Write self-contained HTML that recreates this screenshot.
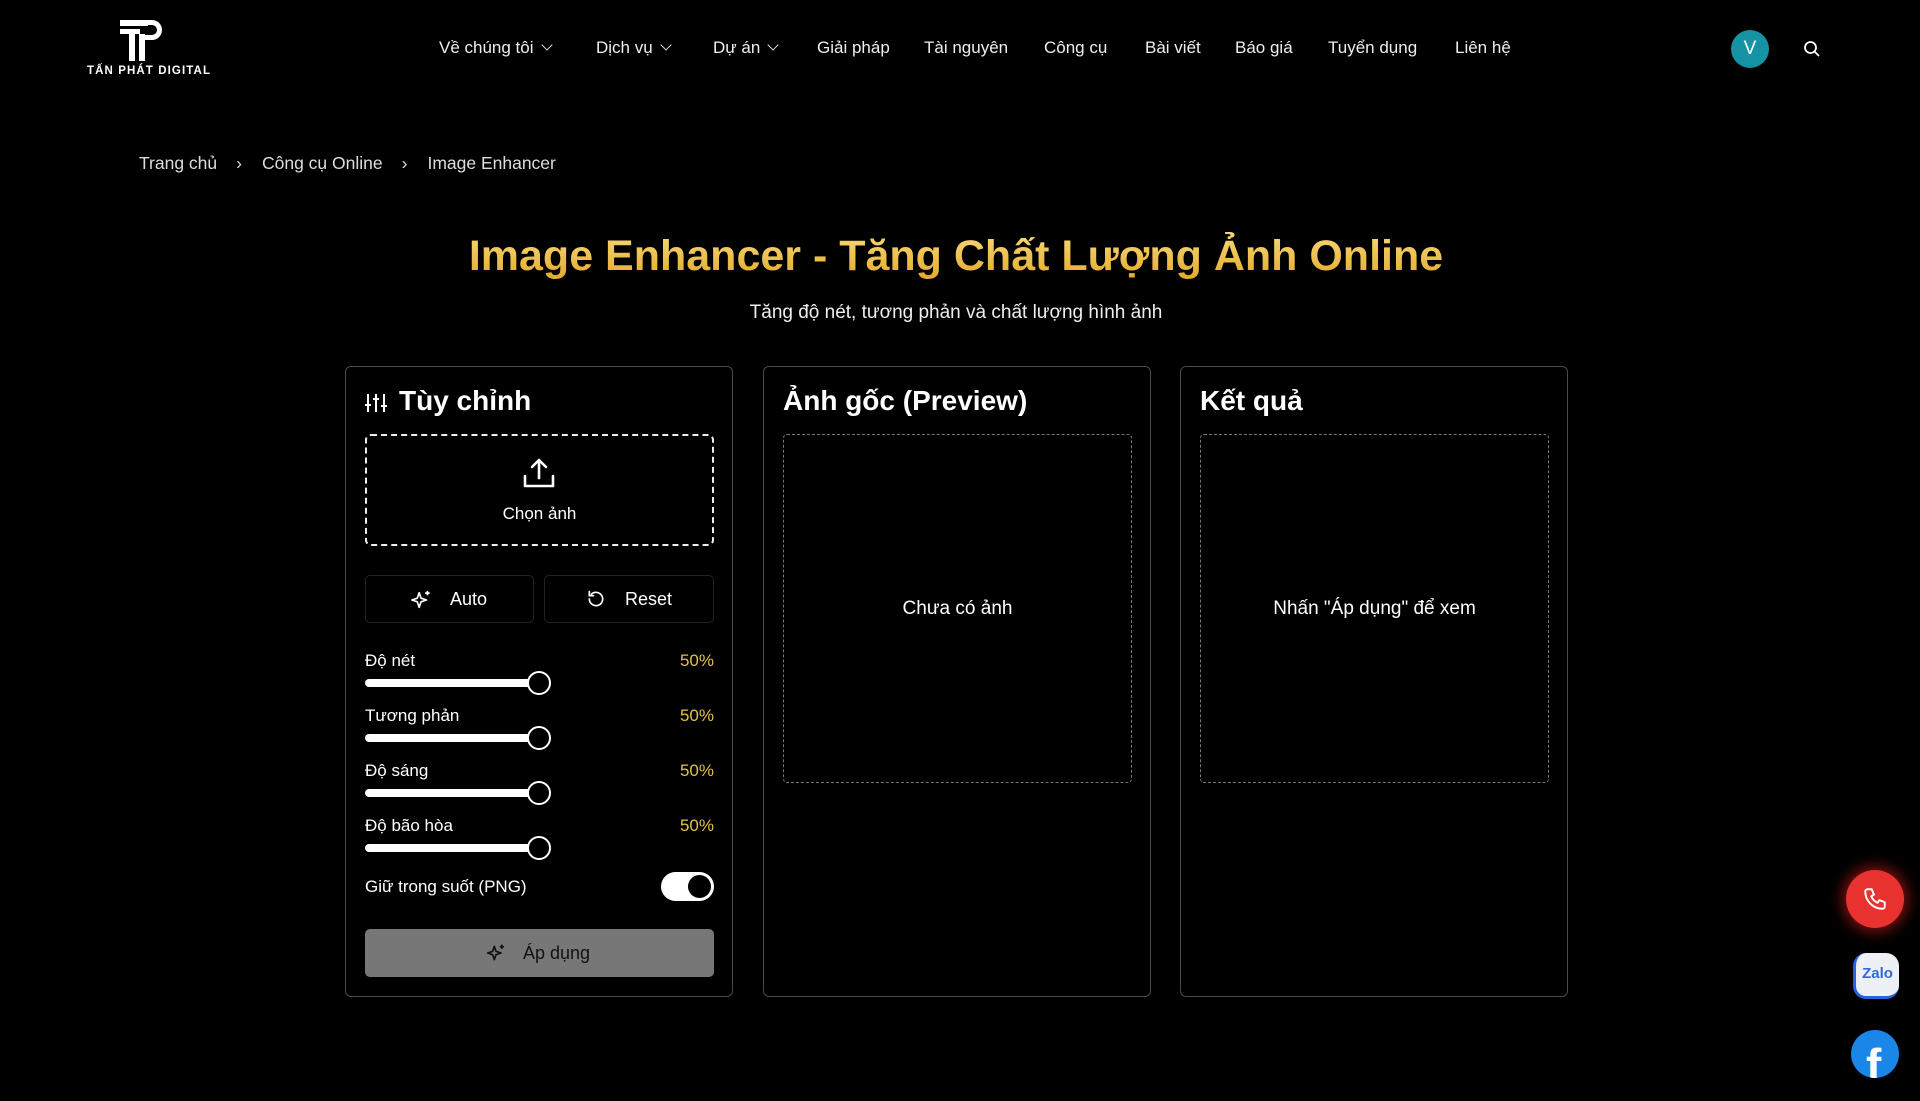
<!DOCTYPE html>
<html><head><meta charset="utf-8">
<style>
*{box-sizing:border-box;margin:0;padding:0}
body{width:1920px;height:1101px;background:#000;color:#fff;font-family:"Liberation Sans",sans-serif;position:relative;overflow:hidden}
.abs{position:absolute}
.nav{top:38px;font-size:17px;color:#eee;white-space:nowrap}
.chev{display:inline-block;width:8px;height:8px;border-right:1.6px solid #ddd;border-bottom:1.6px solid #ddd;transform:rotate(45deg);margin-left:9px;position:relative;top:-4px}
.panel{position:absolute;top:366px;width:388px;height:631px;border:1.5px solid #4a4a4a;border-radius:6px}
.ph{position:absolute;left:19px;top:18px;font-size:28px;font-weight:bold}
.pbox{position:absolute;left:19px;top:67px;width:349px;height:349px;border:1px dashed #777;border-radius:4px;display:flex;align-items:center;justify-content:center;font-size:19px}
.lbl{position:absolute;left:365px;font-size:17px}
.pct{position:absolute;right:1206px;font-size:17px;color:#e3c14a}
.track{position:absolute;left:365px;width:175px;height:8px;background:#fff;border-radius:4px}
.thumb{position:absolute;left:527px;width:24px;height:24px;border-radius:50%;background:#000;border:2.5px solid #fff}
</style></head><body>
<svg class="abs" style="left:118px;top:18px" width="52" height="44" viewBox="0 0 52 44">
<rect x="2" y="2" width="28" height="6" fill="#fff"/><rect x="2" y="11" width="20" height="5" fill="#fff"/>
<rect x="11" y="11" width="6" height="32" fill="#fff"/><rect x="21" y="16" width="6" height="27" fill="#fff"/>
<path d="M22 2h12a10 10 0 0 1 0 20h-7v-5h7a5 5 0 0 0 0-10h-12z" fill="#fff"/>
</svg>
<div class="abs" style="left:87px;top:65px;font-size:11.5px;font-weight:bold;letter-spacing:1.1px">TẤN PHÁT DIGITAL</div>
<div class="abs nav" style="left:439px">Về chúng tôi<span class="chev"></span></div>
<div class="abs nav" style="left:596px">Dịch vụ<span class="chev"></span></div>
<div class="abs nav" style="left:713px">Dự án<span class="chev"></span></div>
<div class="abs nav" style="left:817px">Giải pháp</div>
<div class="abs nav" style="left:924px">Tài nguyên</div>
<div class="abs nav" style="left:1044px">Công cụ</div>
<div class="abs nav" style="left:1145px">Bài viết</div>
<div class="abs nav" style="left:1235px">Báo giá</div>
<div class="abs nav" style="left:1328px">Tuyển dụng</div>
<div class="abs nav" style="left:1455px">Liên hệ</div>
<div class="abs" style="left:1731px;top:30px;width:38px;height:38px;border-radius:50%;background:#1592a3;text-align:center;line-height:38px;font-size:19px">V</div>
<svg class="abs" style="left:1803px;top:40px" width="18" height="18" viewBox="0 0 18 18" fill="none" stroke="#fff" stroke-width="1.8"><circle cx="7.5" cy="7.5" r="5.5"/><path d="M11.5 11.5l4.5 4.5"/></svg>
<div class="abs" style="left:139px;top:153px;font-size:17.5px;color:#ddd;white-space:nowrap">Trang chủ<span style="margin:0 20px 0 19px">›</span>Công cụ Online<span style="margin:0 20px 0 19px">›</span>Image Enhancer</div>
<div class="abs" style="left:0;width:1912px;top:232px;text-align:center;font-size:43px;font-weight:bold;color:#efc03f;background:linear-gradient(#f7d978,#e2a92a);-webkit-background-clip:text;background-clip:text;-webkit-text-fill-color:transparent">Image Enhancer - Tăng Chất Lượng Ảnh Online</div>
<div class="abs" style="left:0;width:1912px;top:302px;text-align:center;font-size:19px;color:#eee">Tăng độ nét, tương phản và chất lượng hình ảnh</div>
<div class="panel" style="left:345px">
<svg class="abs" style="left:19px;top:25px" width="22" height="22" viewBox="0 0 22 22" stroke="#fff" stroke-width="2" fill="none"><path d="M3 2v18M11 2v18M19 2v18M0 13h6M8 7h6M16 14h6"/></svg>
<div class="ph" style="left:53px">Tùy chỉnh</div>
</div>
<div class="abs" style="left:365px;top:434px;width:349px;height:112px;border:2px dashed #eee;border-radius:6px"></div>
<svg class="abs" style="left:522px;top:456px" width="34" height="34" viewBox="0 0 34 34" fill="none" stroke="#fff" stroke-width="2.6" stroke-linecap="round" stroke-linejoin="round"><path d="M17 22V4M10 11l7-7 7 7M3 20v10h28V20"/></svg>
<div class="abs" style="left:365px;width:349px;top:504px;text-align:center;font-size:17px">Chọn ảnh</div>
<div class="abs" style="left:365px;top:575px;width:169px;height:48px;border:1px solid #222;border-radius:5px"></div>
<div class="abs" style="left:544px;top:575px;width:170px;height:48px;border:1px solid #222;border-radius:5px"></div>
<svg class="abs" style="left:410px;top:589px" width="22" height="22" viewBox="0 0 24 24" fill="none" stroke="#fff" stroke-width="1.8" stroke-linejoin="round"><path d="M10 4l2 6 6 2-6 2-2 6-2-6-6-2 6-2z"/><path d="M19 2v5M16.5 4.5h5"/></svg>
<div class="abs" style="left:450px;top:589px;font-size:18px">Auto</div>
<svg class="abs" style="left:586px;top:589px" width="20" height="20" viewBox="0 0 24 24" fill="none" stroke="#fff" stroke-width="2" stroke-linecap="round"><path d="M4 12a8 8 0 1 0 2.5-5.8"/><path d="M4 3v5h5"/></svg>
<div class="abs" style="left:625px;top:589px;font-size:18px">Reset</div>
<div class="lbl" style="top:651px">Độ nét</div><div class="pct" style="top:651px">50%</div><div class="track" style="top:679px"></div><div class="thumb" style="top:671px"></div>
<div class="lbl" style="top:706px">Tương phản</div><div class="pct" style="top:706px">50%</div><div class="track" style="top:734px"></div><div class="thumb" style="top:726px"></div>
<div class="lbl" style="top:761px">Độ sáng</div><div class="pct" style="top:761px">50%</div><div class="track" style="top:789px"></div><div class="thumb" style="top:781px"></div>
<div class="lbl" style="top:816px">Độ bão hòa</div><div class="pct" style="top:816px">50%</div><div class="track" style="top:844px"></div><div class="thumb" style="top:836px"></div>
<div class="lbl" style="top:877px">Giữ trong suốt (PNG)</div>
<div class="abs" style="left:661px;top:872px;width:53px;height:29px;border-radius:15px;background:#fff"></div>
<div class="abs" style="left:688px;top:875px;width:23px;height:23px;border-radius:50%;background:#000"></div>
<div class="abs" style="left:365px;top:929px;width:349px;height:48px;border-radius:5px;background:#777"></div>
<svg class="abs" style="left:486px;top:943px" width="20" height="20" viewBox="0 0 24 24" fill="none" stroke="#111" stroke-width="2" stroke-linejoin="round"><path d="M10 4l2 6 6 2-6 2-2 6-2-6-6-2 6-2z"/><path d="M19 2v5M16.5 4.5h5"/></svg>
<div class="abs" style="left:523px;top:943px;font-size:18px;color:#111">Áp dụng</div>
<div class="panel" style="left:763px"><div class="ph">Ảnh gốc (Preview)</div><div class="pbox">Chưa có ảnh</div></div>
<div class="panel" style="left:1180px"><div class="ph">Kết quả</div><div class="pbox">Nhấn "Áp dụng" để xem</div></div>
<div class="abs" style="left:1846px;top:870px;width:58px;height:58px;border-radius:50%;background:#e8322f;box-shadow:0 0 14px 4px rgba(230,30,30,.55)"></div>
<svg class="abs" style="left:1862px;top:886px" width="26" height="26" viewBox="0 0 24 24" fill="none" stroke="#fff" stroke-width="1.8" stroke-linejoin="round"><path d="M5 3h4l2 5-2.5 1.5a11 11 0 0 0 6 6L16 13l5 2v4a2 2 0 0 1-2 2A16 16 0 0 1 3 5a2 2 0 0 1 2-2z"/></svg>
<div class="abs" style="left:1853px;top:953px;width:46px;height:46px;border-radius:13px;background:#eef0f6;border-left:3px solid #2a63e0;border-bottom:3px solid #2a63e0;color:#2f67e0;font-weight:bold;font-size:15px;text-align:center;line-height:42px">Zalo</div>
<div class="abs" style="left:1851px;top:1030px;width:48px;height:48px;border-radius:50%;background:#1a86e8;overflow:hidden"><div style="position:absolute;left:15px;top:8px;font-size:46px;font-weight:bold;color:#fff;font-family:'Liberation Sans',sans-serif">f</div></div>
</body></html>
